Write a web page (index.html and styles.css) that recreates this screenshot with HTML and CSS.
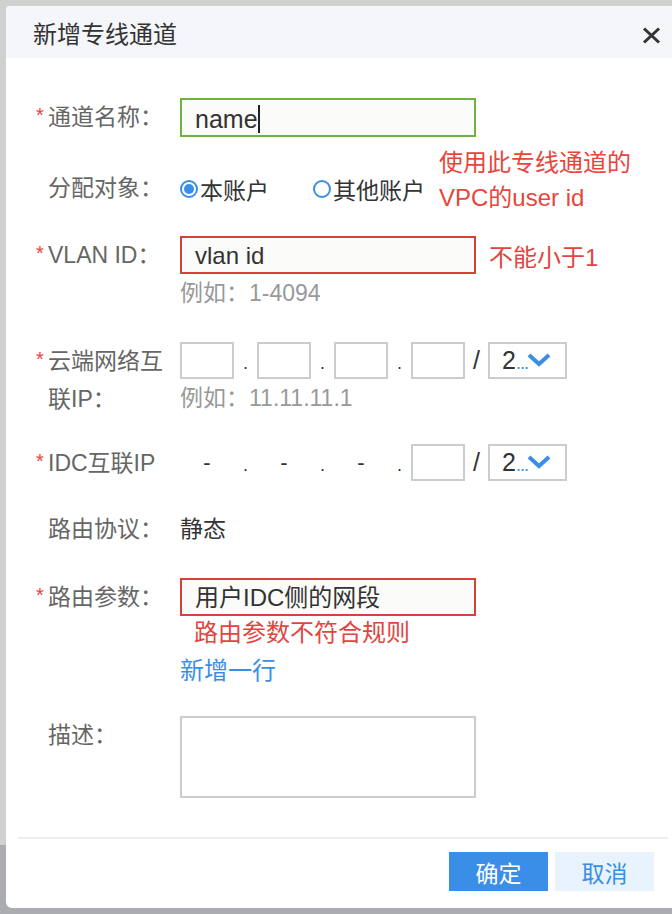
FILE: index.html
```html
<!DOCTYPE html>
<html lang="zh-CN">

<head>
    <meta charset="UTF-8">
    <meta name="viewport" content="width=device-width, initial-scale=1.0">
    <title>新增专线通道</title>
    <link rel="stylesheet" href="styles.css">
</head>

<body>

    <div class="modal">
        <div class="modal-header">
            <h2>新增专线通道</h2>
            <span class="close">
                <svg width="19" height="17" viewBox="0 0 19 17">
                    <path d="M2 1.5 L17 15.5 M17 1.5 L2 15.5" stroke="#333" stroke-width="3" fill="none"/>
                </svg>
            </span>
        </div>

        <form class="modal-body">
            <div class="row row-name">
                <label class="label required">通道名称：</label>
                <div class="field">
                    <div class="input input-focus">name<span class="cursor"></span></div>
                </div>
            </div>

            <div class="row row-target">
                <label class="label label-target">分配对象：</label>
                <div class="radios">
                    <span class="radio checked"></span><span class="radio-text">本账户</span>
                    <span class="radio radio-gap"></span><span class="radio-text">其他账户</span>
                </div>
                <div class="note">使用此专线通道的<br>VPC的user id</div>
            </div>

            <div class="row row-vlan">
                <label class="label required">VLAN ID：</label>
                <div class="field">
                    <div class="inline">
                        <div class="input input-error">vlan id</div>
                        <span class="side-error">不能小于1</span>
                    </div>
                    <div class="hint">例如：1-4094</div>
                </div>
            </div>

            <div class="row row-ip">
                <label class="label required label-wrap">云端网络互<br>联IP：</label>
                <div class="field">
                    <div class="ip">
                        <span class="ip-box"></span><span class="dot">.</span>
                        <span class="ip-box"></span><span class="dot">.</span>
                        <span class="ip-box"></span><span class="dot">.</span>
                        <span class="ip-box"></span><span class="slash">/</span>
                        <span class="select">2<span class="more">...</span>
                            <svg width="26" height="16" viewBox="0 0 26 16">
                                <path d="M3 3 L13 12 L23 3" stroke="#3a8ee6" stroke-width="4" fill="none"/>
                            </svg>
                        </span>
                    </div>
                    <div class="hint">例如：11.11.11.1</div>
                </div>
            </div>

            <div class="row row-idc">
                <label class="label required">IDC互联IP</label>
                <div class="field">
                    <div class="ip">
                        <span class="ip-fixed">-</span><span class="dot">.</span>
                        <span class="ip-fixed">-</span><span class="dot">.</span>
                        <span class="ip-fixed">-</span><span class="dot">.</span>
                        <span class="ip-box"></span><span class="slash">/</span>
                        <span class="select">2<span class="more">...</span>
                            <svg width="26" height="16" viewBox="0 0 26 16">
                                <path d="M3 3 L13 12 L23 3" stroke="#3a8ee6" stroke-width="4" fill="none"/>
                            </svg>
                        </span>
                    </div>
                </div>
            </div>

            <div class="row row-proto">
                <label class="label">路由协议：</label>
                <div class="field value">静态</div>
            </div>

            <div class="row row-route">
                <label class="label required">路由参数：</label>
                <div class="field">
                    <div class="input input-error">用户IDC侧的网段</div>
                    <div class="error">路由参数不符合规则</div>
                    <a class="add-row">新增一行</a>
                </div>
            </div>

            <div class="row row-desc">
                <label class="label">描述：</label>
                <div class="field">
                    <div class="textarea"></div>
                </div>
            </div>
        </form>

        <div class="modal-footer">
            <button type="button" class="btn btn-primary">确定</button>
            <button type="button" class="btn btn-default">取消</button>
        </div>
    </div>

</body>

</html>
```

FILE: styles.css
```css
body {
    font-family: 'Liberation Sans', 'Noto Sans CJK SC', sans-serif;
    background: linear-gradient(to bottom, #d0d0d0 0, #d0d0d0 845px, #aaacaf 845px);
    margin: 0;
    height: 914px;
    overflow: hidden;
}

.modal {
    margin: 6px 0 0 6px;
    width: 666px;
    height: 902px;
    background-color: #fff;
    border-radius: 4px 0 0 6px;
    display: flex;
    flex-direction: column;
}

.modal-header {
    height: 52px;
    background-color: #f5f6fa;
    border-radius: 4px 0 0 0;
    display: flex;
    align-items: center;
    justify-content: space-between;
    padding: 0 10px 0 27px;
}

.modal-header h2 {
    margin: 0;
    font-size: 24px;
    font-weight: normal;
    color: #333;
}

.close {
    display: flex;
    margin-top: 6px;
    margin-right: 1px;
}

.modal-body {
    flex: 1;
    padding: 40px 0 0 29px;
}

.row {
    display: flex;
    align-items: flex-start;
}

.label {
    width: 145px;
    flex-shrink: 0;
    padding-left: 13px;
    box-sizing: border-box;
    font-size: 23px;
    line-height: 39px;
    color: #666;
    white-space: nowrap;
    position: relative;
}

.label.required::before {
    content: "*";
    color: #e8423a;
    font-size: 20px;
    position: absolute;
    left: 1px;
    top: -2px;
}

.label-wrap {
    line-height: 38px;
}

.label-target {
    margin-top: 24px;
}

.input {
    width: 296px;
    height: 39px;
    box-sizing: border-box;
    border: 2px solid #ccc;
    background-color: #fbfbf9;
    padding-left: 13px;
    font-size: 25px;
    line-height: 38px;
    color: #333;
}

.input-focus {
    border-color: #6db33f;
}

.input-error {
    border-color: #d9403a;
    height: 38px;
    line-height: 36px;
    font-size: 24px;
}

.cursor {
    display: inline-block;
    width: 2px;
    height: 28px;
    background-color: #222;
    vertical-align: middle;
    margin-top: -4px;
}

.row-target {
    margin-top: 8px;
}

.radios {
    display: flex;
    align-items: center;
    margin-top: 24px;
    height: 39px;
    font-size: 23px;
    color: #333;
}

.radio {
    width: 14px;
    height: 14px;
    border: 2px solid #3a8ee6;
    border-radius: 50%;
    position: relative;
    margin-right: 2px;
}

.radio.checked::after {
    content: "";
    position: absolute;
    left: 2px;
    top: 2px;
    width: 10px;
    height: 10px;
    border-radius: 50%;
    background-color: #3a8ee6;
}

.radio-gap {
    margin-left: 44px;
}

.note {
    margin-left: 14px;
    font-size: 24px;
    line-height: 35px;
    color: #e8453c;
}

.row-vlan {
    margin-top: 21px;
}

.inline {
    display: flex;
    align-items: center;
}

.side-error {
    margin-left: 13px;
    font-size: 24px;
    color: #e0463f;
}

.hint {
    margin-top: 4px;
    font-size: 23px;
    line-height: 30px;
    color: #999;
}

.row-ip {
    margin-top: 34px;
}

.ip {
    display: flex;
    align-items: center;
    height: 37px;
}

.ip-box {
    width: 54px;
    height: 37px;
    box-sizing: border-box;
    border: 2px solid #ccc;
}

.ip-fixed {
    width: 54px;
    text-align: center;
    font-size: 22px;
    color: #333;
}

.dot {
    width: 23px;
    text-align: center;
    font-size: 18px;
    color: #333;
    margin-top: 6px;
}

.slash {
    width: 23px;
    text-align: center;
    font-size: 25px;
    color: #333;
}

.select {
    width: 79px;
    height: 37px;
    box-sizing: border-box;
    border: 2px solid #ccc;
    display: flex;
    align-items: center;
    padding-left: 12px;
    font-size: 25px;
    color: #333;
}

.more {
    font-size: 18px;
    color: #3a8ee6;
    margin-top: 6px;
    letter-spacing: -1px;
}

.select svg {
    margin-left: -2px;
    margin-top: -2px;
}

.row-idc {
    margin-top: 26px;
}

.row-proto {
    margin-top: 27px;
}

.value {
    font-size: 23px;
    line-height: 38px;
    color: #333;
}

.row-route {
    margin-top: 29px;
}

.error {
    margin-top: 2px;
    padding-left: 14px;
    font-size: 24px;
    line-height: 30px;
    color: #e0463f;
}

.add-row {
    display: block;
    margin-top: 8px;
    font-size: 24px;
    line-height: 30px;
    color: #3a8ee6;
    cursor: pointer;
}

.row-desc {
    margin-top: 30px;
}

.textarea {
    width: 296px;
    height: 82px;
    box-sizing: border-box;
    border: 2px solid #ccc;
    background-color: #fff;
}

.modal-footer {
    margin: 0 4px 0 12px;
    border-top: 2px solid #eee;
    padding: 13px 14px 17px 0;
    display: flex;
    justify-content: flex-end;
    gap: 7px;
}

.btn {
    width: 99px;
    height: 39px;
    border: none;
    font-family: inherit;
    font-size: 23px;
    cursor: pointer;
}

.btn-primary {
    background-color: #3a8ee6;
    color: #fff;
}

.btn-default {
    background-color: #e8f3fd;
    color: #3a8ee6;
}
```
